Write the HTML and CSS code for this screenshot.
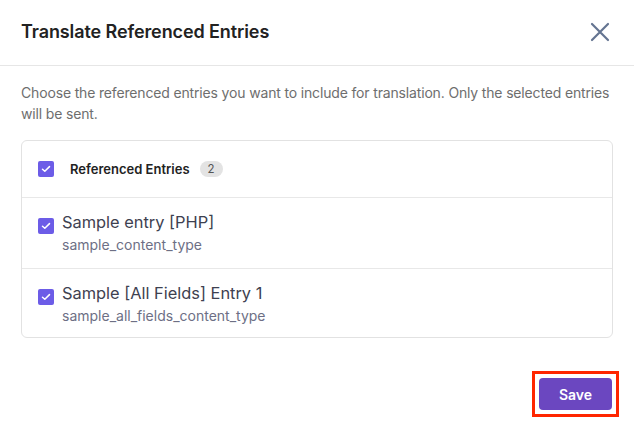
FILE: index.html
```html
<!DOCTYPE html>
<html>
<head>
<meta charset="utf-8">
<link rel="stylesheet" href="styles.css">
</head>
<body>
<div class="modal">
  <div class="modal-header">
    <h2 class="modal-title">Translate Referenced Entries</h2>
    <button class="close-btn" aria-label="Close">
      <svg width="20" height="20" viewBox="0 0 20 20"><path d="M2 2 L18 18 M18 2 L2 18" stroke="#647491" stroke-width="2.2" stroke-linecap="round" fill="none"/></svg>
    </button>
  </div>
  <div class="modal-body">
    <p class="desc">Choose the referenced entries you want to include for translation. Only the selected entries will be sent.</p>
    <div class="card">
      <div class="card-head">
        <span class="cb"><svg width="10" height="8" viewBox="0 0 10 8"><path d="M1.5 4.2 L3.8 6.3 L8.5 1.6" stroke="#fff" stroke-width="1.5" fill="none" stroke-linecap="round" stroke-linejoin="round"/></svg></span>
        <span class="head-label">Referenced Entries</span>
        <span class="badge">2</span>
      </div>
      <div class="row">
        <span class="cb"><svg width="10" height="8" viewBox="0 0 10 8"><path d="M1.5 4.2 L3.8 6.3 L8.5 1.6" stroke="#fff" stroke-width="1.5" fill="none" stroke-linecap="round" stroke-linejoin="round"/></svg></span>
        <div class="row-text">
          <div class="row-title">Sample entry [PHP]</div>
          <div class="row-sub">sample_content_type</div>
        </div>
      </div>
      <div class="row">
        <span class="cb"><svg width="10" height="8" viewBox="0 0 10 8"><path d="M1.5 4.2 L3.8 6.3 L8.5 1.6" stroke="#fff" stroke-width="1.5" fill="none" stroke-linecap="round" stroke-linejoin="round"/></svg></span>
        <div class="row-text">
          <div class="row-title">Sample [All Fields] Entry 1</div>
          <div class="row-sub">sample_all_fields_content_type</div>
        </div>
      </div>
    </div>
  </div>
  <div class="modal-footer">
    <span class="highlight"><button class="save-btn">Save</button></span>
  </div>
</div>
</body>
</html>
```

FILE: styles.css
```css
* { box-sizing: border-box; }
html, body { margin: 0; padding: 0; background: #fff; }
body { font-family: Inter, "Noto Sans", sans-serif; color: #222; }
.modal { width: 634px; height: 427px; display: flex; flex-direction: column; }
.modal-header {
  height: 66px;
  border-bottom: 1px solid #e6e6e6;
  display: flex; align-items: center; justify-content: space-between;
  padding: 0 24px 2px 21px;
}
.modal-title { margin: 0; font-size: 18px; font-weight: 600; color: #222; letter-spacing: -0.1px; }
.close-btn { border: 0; background: none; padding: 0; width: 20px; height: 20px; display: flex; cursor: pointer; }
.modal-body { padding: 16px 21px 0 21px; }
.desc { margin: 0 0 16px 0; font-size: 14px; line-height: 21px; color: #6e6e6e; letter-spacing: -0.16px; }
.card { border: 1px solid #e2e2e2; border-radius: 6px; }
.cb {
  width: 16px; height: 16px; border-radius: 2px; background: #6c5ce7;
  display: inline-flex; align-items: center; justify-content: center; flex: none;
  margin-top: 1px;
}
.card-head {
  height: 57px; display: flex; align-items: center; padding-left: 16px;
  border-bottom: 1px solid #e8e8e8;
}
.card-head .cb { margin-top: 0; }
.head-label { margin-left: 16px; font-size: 13px; font-weight: 600; color: #222; }
.badge {
  margin-left: 10px; background: #e3e3e3; color: #555; font-size: 11.5px;
  border-radius: 9px; padding: 0 8px; height: 16px; line-height: 16px;
}
.row { height: 70px; display: flex; align-items: flex-start; padding: 19px 0 0 16px; }
.row + .row { border-top: 1px solid #e8e8e8; }
.row:last-child { height: 69px; }
.row-text { margin-left: 8px; margin-top: -6px; }
.row-title { font-size: 16.4px; line-height: 22px; color: #3e4150; }
.row-sub { font-size: 14px; line-height: 20px; color: #6d6f85; margin-top: 2px; }
.modal-footer { flex: 1; display: flex; justify-content: flex-end; align-items: flex-start; padding: 33px 15px 0 0; }
.highlight { display: flex; border: 3px solid #ff2600; padding: 4px; }
.save-btn {
  width: 73px; height: 32px; border: 0; border-radius: 4px;
  background: #6b47c0; color: #fff; font-family: Inter, sans-serif;
  font-size: 14px; font-weight: 600;
}
```
